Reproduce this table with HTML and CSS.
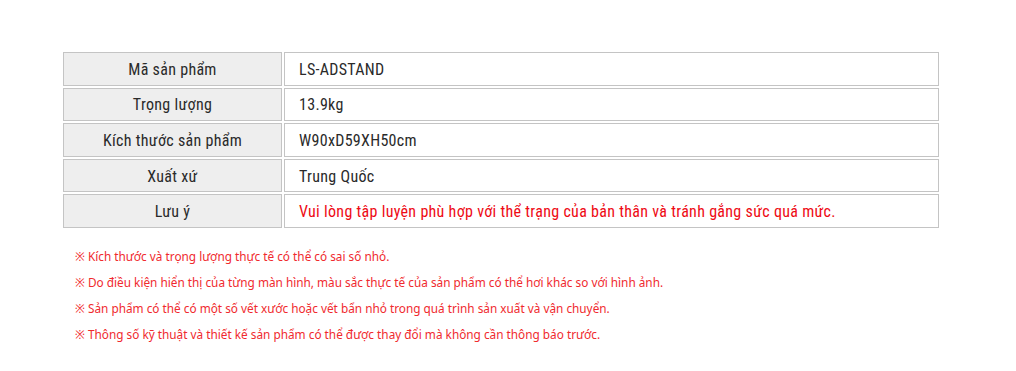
FILE: index.html
```html
<!DOCTYPE html>
<html lang="vi"><head><meta charset="utf-8"><link rel="stylesheet" href="styles.css"></head>
<body>
<div class="wrap">
  <div class="spec">
    <div class="label">Mã sản phẩm</div><div class="value">LS-ADSTAND</div>
    <div class="label">Trọng lượng</div><div class="value">13.9kg</div>
    <div class="label">Kích thước sản phẩm</div><div class="value">W90xD59XH50cm</div>
    <div class="label">Xuất xứ</div><div class="value">Trung Quốc</div>
    <div class="label">Lưu ý</div><div class="value warn">Vui lòng tập luyện phù hợp với thể trạng của bản thân và tránh gắng sức quá mức.</div>
  </div>
  <ul class="notes">
    <li>※ Kích thước và trọng lượng thực tế có thể có sai số nhỏ.</li>
    <li>※ Do điều kiện hiển thị của từng màn hình, màu sắc thực tế của sản phẩm có thể hơi khác so với hình ảnh.</li>
    <li>※ Sản phẩm có thể có một số vết xước hoặc vết bẩn nhỏ trong quá trình sản xuất và vận chuyển.</li>
    <li>※ Thông số kỹ thuật và thiết kế sản phẩm có thể được thay đổi mà không cần thông báo trước.</li>
  </ul>
</div>
</body></html>
```
FILE: styles.css
```css
html,body{margin:0;padding:0;background:#fff}
.wrap{padding:52px 0 0 63px}
.spec{display:grid;grid-template-columns:219px 655px;column-gap:2px;row-gap:2px;width:876px;
  font-family:"Roboto Condensed","Liberation Sans Narrow",sans-serif;font-size:16px;font-weight:400;letter-spacing:0.3px;color:#2a2a2a}
.label,.value{box-sizing:border-box;height:33.6px;padding-top:1px;border:1px solid #c4c4c4;display:flex;align-items:center}
.label{background:#eeeeee;justify-content:center}
.value{background:#fff;padding-left:14px}
.warn{color:#ee0a14}
.notes{list-style:none;margin:15px 0 0 12px;padding:0;font-family:"Noto Sans",sans-serif;font-size:11.8px;font-weight:400;color:#f02a2e;line-height:26px;letter-spacing:0}
```
